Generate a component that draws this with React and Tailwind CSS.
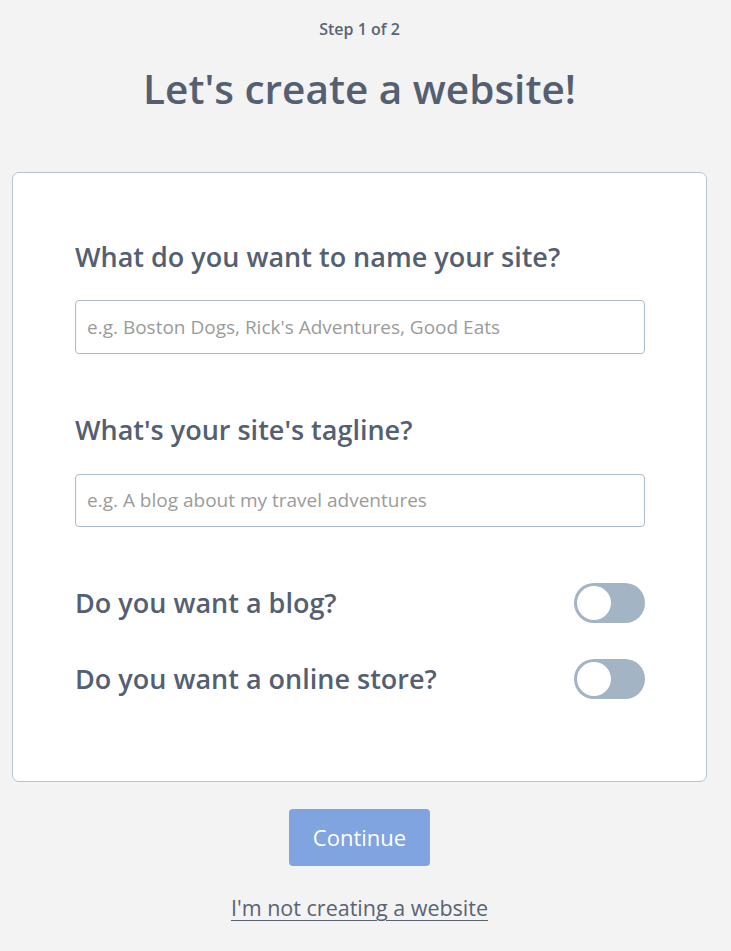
export default function App() {
  const Toggle = () => (
    <div className="w-[71px] h-[40px] rounded-full bg-[#a3b4c4] flex items-center pl-[3px] shrink-0">
      <div className="w-[34px] h-[34px] rounded-full bg-white"></div>
    </div>
  );
  return (
    <div className="min-h-[951px] bg-[#f3f3f3]" style={{ fontFamily: '"Open Sans", sans-serif' }}>
      <div className="w-[719px] pt-[18px] pb-[20px]">
        <div className="text-center text-[16px] leading-[22px] font-semibold text-[#596374]">Step 1 of 2</div>
        <h1 className="mt-[25px] text-center text-[40.5px] leading-[48px] font-semibold text-[#545f71]">Let's create a website!</h1>
        <div className="mt-[59px] ml-[12px] w-[695px] bg-white border border-[#b3c3d2] rounded-[7px] pt-[66px] pb-[82px] pl-[62px] pr-[61px]">
          <div className="text-[27px] leading-[36px] font-semibold text-[#545f71]">What do you want to name your site?</div>
          <div className="mt-[25px] h-[54px] border border-[#aabccb] rounded-[4px] flex items-center px-[11px] text-[19px] text-[#9b9b9b]">
            e.g. Boston Dogs, Rick's Adventures, Good Eats
          </div>
          <div className="mt-[58px] text-[27px] leading-[36px] font-semibold text-[#545f71]">What's your site's tagline?</div>
          <div className="mt-[26px] h-[53px] border border-[#aabccb] rounded-[4px] flex items-center px-[11px] text-[19px] text-[#9b9b9b]">
            e.g. A blog about my travel adventures
          </div>
          <div className="mt-[56px] flex items-center justify-between">
            <div className="text-[27px] leading-[36px] font-semibold text-[#545f71]">Do you want a blog?</div>
            <Toggle />
          </div>
          <div className="mt-[36px] flex items-center justify-between">
            <div className="text-[27px] leading-[36px] font-semibold text-[#545f71]">Do you want a online store?</div>
            <Toggle />
          </div>
        </div>
        <div className="mt-[27px] flex justify-center">
          <button className="w-[141px] h-[57px] rounded-[4px] bg-[#7fa4e0] text-white text-[22px] font-normal">Continue</button>
        </div>
        <div className="mt-[27px] text-center">
          <a className="text-[21.5px] leading-[30px] text-[#596374] underline underline-offset-[4px] decoration-1">I'm not creating a website</a>
        </div>
      </div>
    </div>
  );
}
